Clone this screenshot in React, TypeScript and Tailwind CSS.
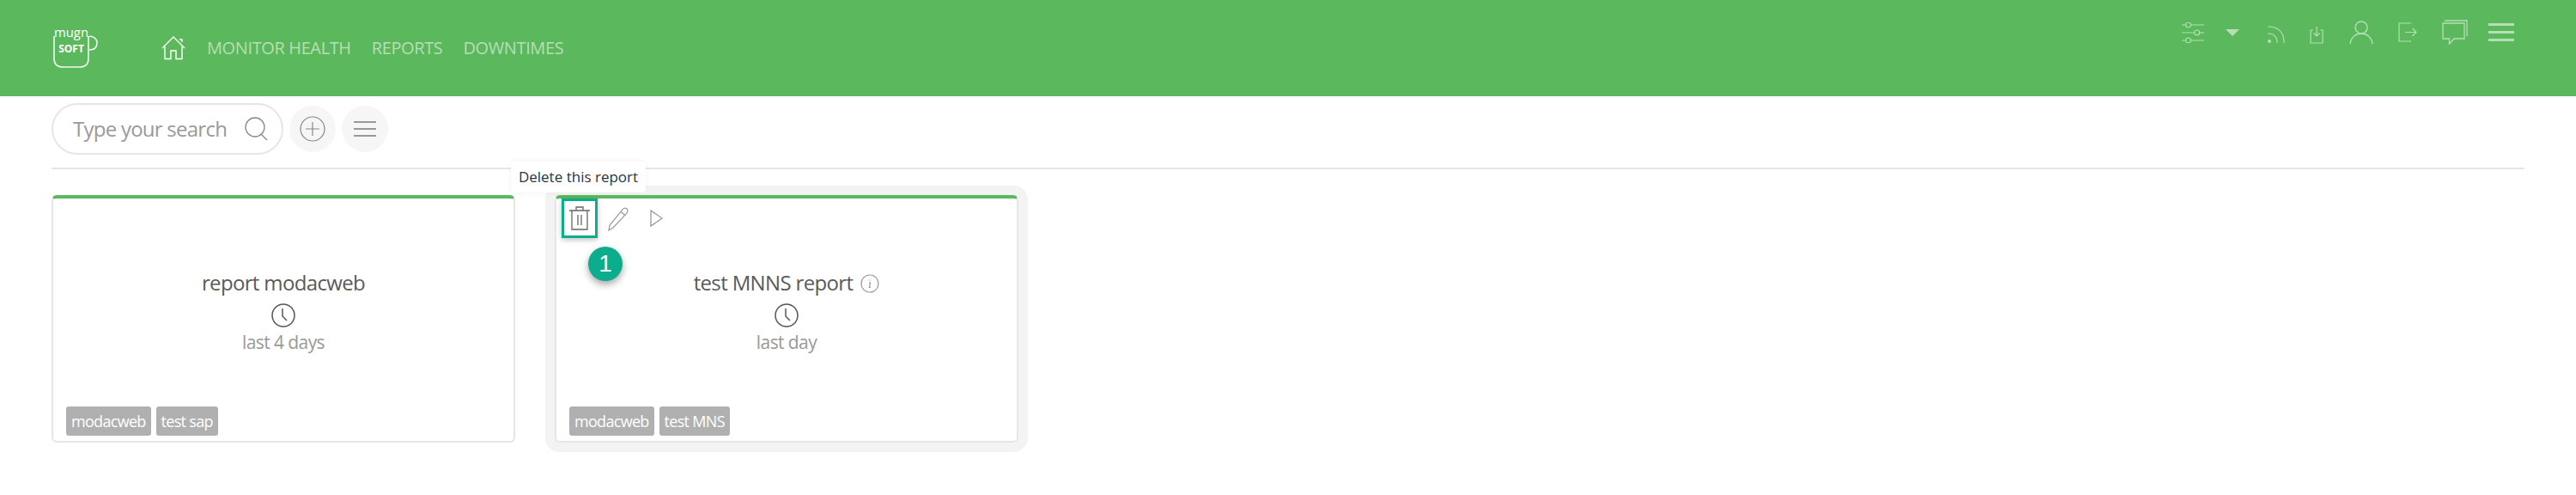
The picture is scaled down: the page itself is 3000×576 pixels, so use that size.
import React from 'react';

const LINE = 'stroke-[#b5dfb5]';

function Logo() {
  return (
    <svg width="56" height="60" viewBox="0 -4 56 60" fill="none" stroke="#fff" strokeOpacity="0.9" strokeWidth="1.6">
      <path d="M2 12 V38 Q2 48 12 48 H32 Q42 48 42 38 V12" />
      <path d="M43 12 Q52 13 52 20 Q52 28 43 28" />
      <text x="22" y="13" textAnchor="middle" fill="#fff" stroke="none" fontSize="15" textLength="40" lengthAdjust="spacingAndGlyphs" fontFamily="Open Sans, sans-serif">mugn</text>
      <text x="22" y="31" textAnchor="middle" fill="#fff" stroke="none" fontSize="12" fontWeight="700" fontFamily="Open Sans, sans-serif">SOFT</text>
    </svg>
  );
}

function HomeIcon() {
  return (
    <svg width="28" height="28" viewBox="0 0 28 28" fill="none" stroke="#fff" strokeWidth="1.4">
      <path d="M1 14 L14 1 L27 14" />
      <path d="M4 12 V26.500 H11 V17 H17 V26.500 H24 V12" />
      <path d="M21 4 H24 V7" />
    </svg>
  );
}

/* header icons on the right, all thin pale strokes */
function HeaderIcons() {
  return (
    <div className="flex items-center">
      <svg width="26" height="24" viewBox="0 0 26 24" fill="none" strokeWidth="1.200" className={LINE}>
        <path d="M0 3 H4 M11 3 H26 M0 12 H14 M21 12 H26 M0 21 H4 M11 21 H26" />
        <circle cx="7.500" cy="3" r="3" />
        <circle cx="17.500" cy="12" r="3" />
        <circle cx="7.500" cy="21" r="3" />
      </svg>
      <svg width="16" height="8" viewBox="0 0 16 8" className="ml-[25px] fill-[#b5dfb5]">
        <path d="M0 0 H16 L8 8 Z" />
      </svg>
      <svg width="21" height="21" viewBox="0 0 21 21" fill="none" strokeWidth="1.200" className={`ml-[32px] mt-[6px] ${LINE}`}>
        <path d="M1 1 Q20 1 20 20 M1 9 Q12 9 12 20" />
        <circle cx="3" cy="18" r="2" className="fill-[#b5dfb5]" stroke="none" />
      </svg>
      <svg width="16" height="21" viewBox="0 0 16 21" fill="none" strokeWidth="1.200" className={`ml-[29px] mt-[6px] ${LINE}`}>
        <path d="M4 5 H1 V20 H15 V5 H12 M8 1 V12 M4.500 8.500 L8 12 L11.500 8.500" />
      </svg>
      <svg width="28" height="28" viewBox="0 0 28 28" fill="none" strokeWidth="1.400" className={`ml-[30px] ${LINE}`}>
        <circle cx="14" cy="8" r="7" />
        <path d="M1 27 C2 19 8 15 14 15 C20 15 26 19 27 27" />
      </svg>
      <svg width="22" height="23" viewBox="0 0 22 23" fill="none" strokeWidth="1.200" className={`ml-[29px] ${LINE}`}>
        <path d="M15 1 H1 V22 H15 M8 11.500 H21 M16.500 7 L21 11.500 L16.500 16" />
      </svg>
      <svg width="30" height="30" viewBox="0 0 30 30" fill="none" strokeWidth="1.300" className={`ml-[29px] ${LINE}`}>
        <path d="M3 1 H29 V19 M1 4 H26 V22 H14 L8.500 28 V22 H1 Z" />
      </svg>
      <div className={`ml-[24px] flex w-[30px] flex-col gap-[6px]`}>
        <div className="h-[3px] bg-[#b5dfb5]" />
        <div className="h-[3px] bg-[#b5dfb5]" />
        <div className="h-[3px] bg-[#b5dfb5]" />
      </div>
    </div>
  );
}

function Clock() {
  return (
    <svg width="28" height="28" viewBox="0 0 28 28" fill="none" stroke="#555" strokeWidth="1.500">
      <circle cx="14" cy="14" r="13" />
      <path d="M13 6 V15 L18 20" />
    </svg>
  );
}

function Tag({ label }: { label: string }) {
  return (
    <span className="flex h-[34px] items-center rounded-[3px] bg-[#b0b0b0] px-[6px] text-[18px] tracking-[-0.7px] text-white">
      {label}
    </span>
  );
}

interface CardProps {
  title: string;
  range: string;
  tags: string[];
  info?: boolean;
  children?: React.ReactNode;
}

function ReportCard({ title, range, tags, info, children }: CardProps) {
  return (
    <div className="relative flex h-[288px] w-[540px] flex-col rounded-[6px] border-2 border-t-4 border-[#e6e6e6] border-t-[#5cb85c] bg-white">
      {children}
      <div className="flex h-[242px] flex-col items-center pt-[77px]">
        <div className="flex h-[42px] items-center gap-[9px] text-[24px] tracking-[-0.65px] text-[#5a5a5a]">
          {title}
          {info && (
            <svg width="22" height="22" viewBox="0 0 22 22" fill="none" stroke="#999" strokeWidth="1.200" className="mt-[2px]">
              <circle cx="11" cy="11" r="10" />
              <path d="M10 10 H11.500 L10.500 15.500 H12 M11 6.500 V7.500" />
            </svg>
          )}
        </div>
        <div className="mt-[3px]"><Clock /></div>
        <div className="mt-[2px] text-[21px] tracking-[-0.58px] text-[#999]">{range}</div>
      </div>
      <div className="flex gap-[6px] pl-[15px]">
        {tags.map((t) => <Tag key={t} label={t} />)}
      </div>
    </div>
  );
}

export default function App() {
  return (
    <div className="h-[576px] w-[3000px] overflow-hidden bg-white font-['Open_Sans',sans-serif]">
      <header className="flex h-[112px] items-center bg-[#5cb85c] pl-[61px] pr-[72px]">
        <Logo />
        <div className="ml-[71px] flex items-center">
          <HomeIcon />
          <nav className="ml-[25px] flex gap-[24px] text-[20px] tracking-[-0.38px] text-[#b5dfb5]">
            <span>MONITOR HEALTH</span>
            <span>REPORTS</span>
            <span>DOWNTIMES</span>
          </nav>
        </div>
        <div className="ml-auto -mt-[37px]"><HeaderIcons /></div>
      </header>

      <main className="px-[60px]">
        <div className="flex h-[85px] items-start gap-[7px] border-b-2 border-[#e6e6e6] pt-[8px]">
          <div className="flex h-[60px] w-[270px] items-center justify-between rounded-full border-2 border-[#e6e6e6] pl-[23px] pr-[16px]">
            <span className="text-[24px] tracking-[-0.75px] text-[#999]">Type your search</span>
            <svg width="27" height="28" viewBox="0 0 27 28" fill="none" stroke="#888" strokeWidth="1.300">
              <circle cx="12" cy="12" r="11" />
              <path d="M19 20 L26 27" />
            </svg>
          </div>
          <div className="mt-[3px] flex h-[54px] w-[54px] items-center justify-center rounded-full bg-[#f6f6f6]">
            <svg width="30" height="30" viewBox="0 0 30 30" fill="none" stroke="#888" strokeWidth="1.200">
              <circle cx="15" cy="15" r="14" />
              <path d="M15 7 V23 M7 15 H23" />
            </svg>
          </div>
          <div className="mt-[3px] flex h-[54px] w-[54px] items-center justify-center rounded-full bg-[#f6f6f6]">
            <div className="flex w-[26px] flex-col gap-[6px]">
              <div className="h-[2px] bg-[#999]" />
              <div className="h-[2px] bg-[#999]" />
              <div className="h-[2px] bg-[#999]" />
            </div>
          </div>
        </div>

        <div className="mt-[30px] flex gap-[46px]">
          <ReportCard title="report modacweb" range="last 4 days" tags={['modacweb', 'test sap']} />

          <div className="relative rounded-[6px] shadow-[0_0_0_11px_#f3f3f3]">
            <ReportCard title="test MNNS report" range="last day" tags={['modacweb', 'test MNS']} info>
              {/* hovered card toolbar */}
              <div className="absolute left-[6px] top-0 flex items-center">
                <div className="flex h-[46px] w-[42px] items-center justify-center border-[3px] border-[#0bad8d] shadow-[0_2px_6px_rgba(0,0,0,0.25)]">
                  <svg width="24" height="28" viewBox="0 0 24 28" fill="none" stroke="#666" strokeWidth="1.300">
                    <path d="M0 5 H24 M8 5 V1 H16 V5 M3 5 V27 H21 V5 M10 10 V22 M14 10 V22" />
                  </svg>
                </div>
                <svg width="24" height="28" viewBox="0 0 24 28" fill="none" stroke="#999" strokeWidth="1.200" className="ml-[12px] mt-[2px]">
                  <path d="M17 3 Q19 0 22 2 Q24 4 22 7 L6 24 L1 27 L2 21 Z M15 5 L20 10" />
                </svg>
                <svg width="15" height="20" viewBox="0 0 15 20" fill="none" stroke="#999" strokeWidth="1.300" className="ml-[25px]">
                  <path d="M1 1 L14 10 L1 19 Z" />
                </svg>
              </div>
              <div className="absolute left-[37px] top-[56px] flex h-[40px] w-[40px] items-center justify-center rounded-full bg-[#0bad8d] text-[28px] text-white shadow-[0_4px_8px_rgba(0,0,0,0.35)] font-['Liberation_Sans',sans-serif]">
                1
              </div>
            </ReportCard>
            <div className="absolute -left-[51px] -top-[39px] flex h-[36px] w-[157px] items-center justify-center rounded-[4px] bg-white text-[17px] text-[#333] shadow-[0_0_6px_rgba(0,0,0,0.06)]">
              Delete this report
            </div>
          </div>
        </div>
      </main>
    </div>
  );
}
